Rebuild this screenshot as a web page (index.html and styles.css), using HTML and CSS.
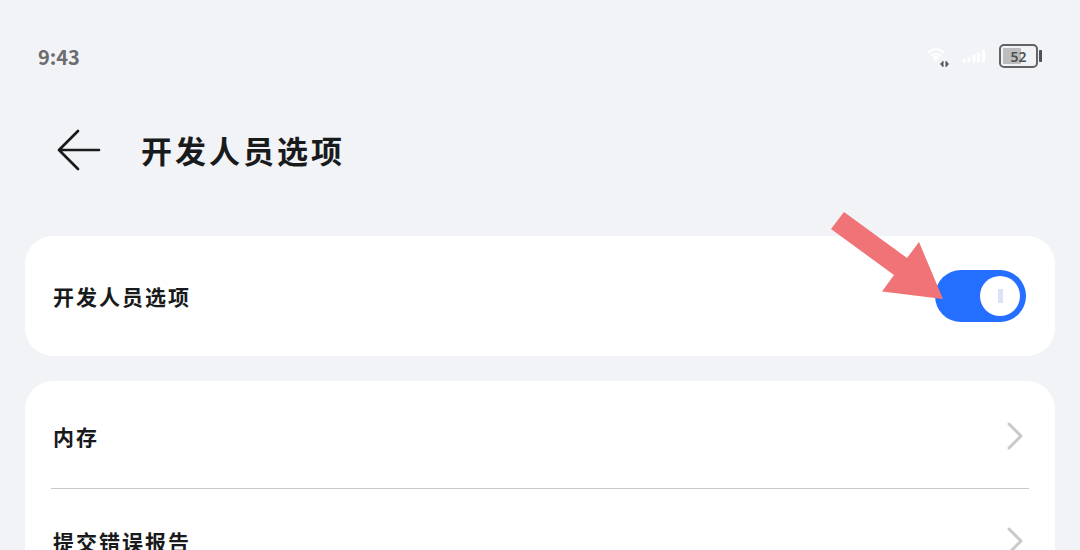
FILE: index.html
```html
<!DOCTYPE html>
<html lang="zh-CN">
<head>
    <meta charset="UTF-8">
    <meta name="viewport" content="width=device-width, initial-scale=1.0">
    <title>开发人员选项</title>
    <link rel="stylesheet" href="styles.css">
</head>
<body>
    <div class="screen">
        <div class="status-bar">
            <span class="time">9:43</span>
            <div class="status-icons">
                <svg class="wifi" width="24" height="24" viewBox="0 0 24 24" aria-hidden="true">
                    <g fill="none" stroke="#fff" stroke-width="2">
                        <path d="M1 7.500a11.500 11.500 0 0 1 16 0"/>
                        <path d="M4 11a7 7 0 0 1 10 0"/>
                    </g>
                    <path d="M5.500 12.500a5 5 0 0 1 7 0L9 16.500z" fill="#fff"/>
                    <path d="M13 19l3-3v6zM22 19l-3-3v6z" fill="#555"/>
                    <path d="M16 16v6M19 16v6" stroke="#555"/>
                </svg>
                <svg class="signal" width="24" height="16" viewBox="0 0 24 16" aria-hidden="true">
                    <path d="M2 11v1M7 9.500V12M12 7V12M16.500 4.500V12M21.500 2V12" stroke="#fff" stroke-width="3" stroke-linecap="round"/>
                </svg>
                <div class="battery"><span>52</span></div>
            </div>
        </div>

        <header class="header">
            <button class="back" type="button" aria-label="返回">
                <svg width="44" height="42" viewBox="0 0 44 42">
                    <path d="M21 2L2 21l19 19M2 21h40" fill="none" stroke="#191a1c" stroke-width="2.700" stroke-linecap="round" stroke-linejoin="round"/>
                </svg>
            </button>
            <h1>开发人员选项</h1>
        </header>

        <main>
            <section class="card switch-card">
                <label for="dev-options">开发人员选项</label>
                <div class="switch">
                    <input type="checkbox" id="dev-options" role="switch" checked>
                    <svg class="pointer" width="112" height="88" viewBox="0 0 112 88" aria-hidden="true">
                        <path d="M13 0L76 46 88 30 112 87 51 79.500 63 63 0 17z" fill="#ef7377"/>
                    </svg>
                </div>
            </section>

            <nav class="card list">
                <a class="row" href="#memory">
                    <span>内存</span>
                    <svg class="chevron" width="16" height="28" viewBox="0 0 16 28" aria-hidden="true">
                        <path d="M2 2l12 12L2 26"/>
                    </svg>
                </a>
                <a class="row" href="#bug-report">
                    <span>提交错误报告</span>
                    <svg class="chevron" width="16" height="28" viewBox="0 0 16 28" aria-hidden="true">
                        <path d="M2 2l12 12L2 26"/>
                    </svg>
                </a>
            </nav>
        </main>
    </div>
</body>
</html>
```
FILE: styles.css
```css
* {
    margin: 0;
    padding: 0;
    box-sizing: border-box;
}

body {
    background: #f1f3f6;
    color: #191a1c;
    font-family: "Noto Sans CJK SC", "Noto Sans", sans-serif;
}

.screen {
    height: 100vh;
    overflow: hidden;
}

/* status bar */
.status-bar {
    display: flex;
    justify-content: space-between;
    align-items: center;
    padding: 42px 38px 40px;
    line-height: 30px;
}

.time {
    font-size: 20px;
    font-weight: 700;
    color: #6b6c6e;
}

.status-icons {
    display: flex;
    align-items: center;
    gap: 11px;
}

.battery {
    position: relative;
    width: 39px;
    height: 24px;
    margin: 0 4px 2px 2px;
    border: 2px solid #626365;
    border-radius: 5px;
    background: linear-gradient(#bcbdbf, #bcbdbf) 2px 2px / 18px 16px no-repeat;
    color: #505153;
    font-family: "Noto Sans", sans-serif;
    font-size: 14px;
    font-weight: 600;
    line-height: 21px;
    text-align: center;
}

.battery::after {
    content: "";
    position: absolute;
    top: 4px;
    right: -6px;
    width: 3px;
    height: 12px;
    border-radius: 1px;
    background: #505153;
}

/* title */
.header {
    display: flex;
    align-items: center;
    gap: 40px;
    padding: 15px 57px 63px;
}

.back {
    height: 42px;
    border: none;
    background: none;
    cursor: pointer;
}

.back svg {
    display: block;
}

h1 {
    font-size: 31px;
    font-weight: 700;
    line-height: 46px;
    letter-spacing: 3px;
}

/* cards */
.card {
    margin: 0 25px 25px;
    border-radius: 28px;
    background: #fff;
    font-size: 21px;
    font-weight: 700;
    line-height: 32px;
    letter-spacing: 2px;
}

.switch-card {
    display: flex;
    justify-content: space-between;
    align-items: center;
    min-height: 120px;
    padding: 0 29px 0 28px;
}

.switch {
    position: relative;
    height: 52px;
}

.switch input {
    appearance: none;
    display: flex;
    align-items: center;
    justify-content: flex-end;
    width: 91px;
    height: 52px;
    padding: 6px;
    border-radius: 26px;
    background: #c9ccd1;
    cursor: pointer;
}

.switch input::before {
    content: "";
    width: 40px;
    height: 40px;
    border-radius: 50%;
    background: linear-gradient(#dbe3fa, #dbe3fa) center / 5px 14px no-repeat #fff;
}

.switch input:checked {
    background: #246fff;
}

.switch input:not(:checked) {
    justify-content: flex-start;
}

.pointer {
    position: absolute;
    top: -58px;
    left: -104px;
    pointer-events: none;
}

.list {
    padding: 3px 26px;
}

.row {
    display: flex;
    justify-content: space-between;
    align-items: center;
    height: 104px;
    padding: 0 6px 0 2px;
    color: inherit;
    text-decoration: none;
}

.row + .row {
    border-top: 1px solid #c9cacc;
}

.chevron {
    fill: none;
    stroke: #c8c9cb;
    stroke-width: 3;
    stroke-linecap: round;
    stroke-linejoin: round;
}
```
